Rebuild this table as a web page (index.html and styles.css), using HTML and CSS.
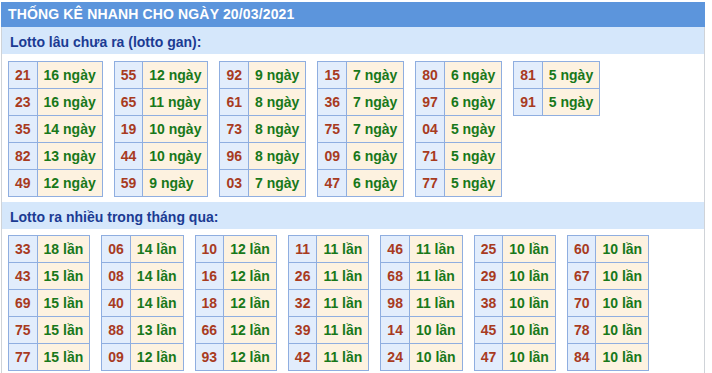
FILE: index.html
```html
<!DOCTYPE html>
<html lang="vi">
<head>
<meta charset="utf-8">
<link rel="stylesheet" href="styles.css">
</head>
<body>
<div class="wrap">
  <div class="title">THỐNG KÊ NHANH CHO NGÀY 20/03/2021</div>
  <div class="sec">Lotto lâu chưa ra (lotto gan):</div>
  <div class="grid g1">
    <table><tr><td class="n">21</td><td class="v">16 ngày</td></tr><tr><td class="n">23</td><td class="v">16 ngày</td></tr><tr><td class="n">35</td><td class="v">14 ngày</td></tr><tr><td class="n">82</td><td class="v">13 ngày</td></tr><tr><td class="n">49</td><td class="v">12 ngày</td></tr></table>
    <table><tr><td class="n">55</td><td class="v">12 ngày</td></tr><tr><td class="n">65</td><td class="v">11 ngày</td></tr><tr><td class="n">19</td><td class="v">10 ngày</td></tr><tr><td class="n">44</td><td class="v">10 ngày</td></tr><tr><td class="n">59</td><td class="v">9 ngày</td></tr></table>
    <table><tr><td class="n">92</td><td class="v">9 ngày</td></tr><tr><td class="n">61</td><td class="v">8 ngày</td></tr><tr><td class="n">73</td><td class="v">8 ngày</td></tr><tr><td class="n">96</td><td class="v">8 ngày</td></tr><tr><td class="n">03</td><td class="v">7 ngày</td></tr></table>
    <table><tr><td class="n">15</td><td class="v">7 ngày</td></tr><tr><td class="n">36</td><td class="v">7 ngày</td></tr><tr><td class="n">75</td><td class="v">7 ngày</td></tr><tr><td class="n">09</td><td class="v">6 ngày</td></tr><tr><td class="n">47</td><td class="v">6 ngày</td></tr></table>
    <table><tr><td class="n">80</td><td class="v">6 ngày</td></tr><tr><td class="n">97</td><td class="v">6 ngày</td></tr><tr><td class="n">04</td><td class="v">5 ngày</td></tr><tr><td class="n">71</td><td class="v">5 ngày</td></tr><tr><td class="n">77</td><td class="v">5 ngày</td></tr></table>
    <table><tr><td class="n">81</td><td class="v">5 ngày</td></tr><tr><td class="n">91</td><td class="v">5 ngày</td></tr></table>
  </div>
  <div class="sec sec2">Lotto ra nhiều trong tháng qua:</div>
  <div class="grid g2">
    <table><tr><td class="n">33</td><td class="v">18 lần</td></tr><tr><td class="n">43</td><td class="v">15 lần</td></tr><tr><td class="n">69</td><td class="v">15 lần</td></tr><tr><td class="n">75</td><td class="v">15 lần</td></tr><tr><td class="n">77</td><td class="v">15 lần</td></tr></table>
    <table><tr><td class="n">06</td><td class="v">14 lần</td></tr><tr><td class="n">08</td><td class="v">14 lần</td></tr><tr><td class="n">40</td><td class="v">14 lần</td></tr><tr><td class="n">88</td><td class="v">13 lần</td></tr><tr><td class="n">09</td><td class="v">12 lần</td></tr></table>
    <table><tr><td class="n">10</td><td class="v">12 lần</td></tr><tr><td class="n">16</td><td class="v">12 lần</td></tr><tr><td class="n">18</td><td class="v">12 lần</td></tr><tr><td class="n">66</td><td class="v">12 lần</td></tr><tr><td class="n">93</td><td class="v">12 lần</td></tr></table>
    <table><tr><td class="n">11</td><td class="v">11 lần</td></tr><tr><td class="n">26</td><td class="v">11 lần</td></tr><tr><td class="n">32</td><td class="v">11 lần</td></tr><tr><td class="n">39</td><td class="v">11 lần</td></tr><tr><td class="n">42</td><td class="v">11 lần</td></tr></table>
    <table><tr><td class="n">46</td><td class="v">11 lần</td></tr><tr><td class="n">68</td><td class="v">11 lần</td></tr><tr><td class="n">98</td><td class="v">11 lần</td></tr><tr><td class="n">14</td><td class="v">10 lần</td></tr><tr><td class="n">24</td><td class="v">10 lần</td></tr></table>
    <table><tr><td class="n">25</td><td class="v">10 lần</td></tr><tr><td class="n">29</td><td class="v">10 lần</td></tr><tr><td class="n">38</td><td class="v">10 lần</td></tr><tr><td class="n">45</td><td class="v">10 lần</td></tr><tr><td class="n">47</td><td class="v">10 lần</td></tr></table>
    <table><tr><td class="n">60</td><td class="v">10 lần</td></tr><tr><td class="n">67</td><td class="v">10 lần</td></tr><tr><td class="n">70</td><td class="v">10 lần</td></tr><tr><td class="n">78</td><td class="v">10 lần</td></tr><tr><td class="n">84</td><td class="v">10 lần</td></tr></table>
  </div>
</div>
</body>
</html>
```
FILE: styles.css
```css
html, body {
  margin: 0;
  padding: 0;
  background: #ffffff;
}
body {
  font-family: "Liberation Sans", Arial, sans-serif;
  font-size: 14px;
  font-weight: bold;
}
.wrap {
  margin: 2px 0 0 1px;
  width: 704px;
  box-sizing: border-box;
  border-left: 1px solid #cfd3d8;
  border-right: 1px solid #cfd3d8;
  min-height: 371px;
}
.title {
  background: #5c95dc;
  color: #ffffff;
  height: 25px;
  line-height: 25px;
  padding-left: 7px;
  margin-left: -1px;
  margin-right: -1px;
  letter-spacing: 0.15px;
}
.sec {
  background: #d5e7fb;
  color: #1b3b93;
  height: 27px;
  box-sizing: border-box;
  padding: 7px 0 0 8px;
  line-height: 16px;
}
.sec2 {
  margin-top: 5px;
}
.grid {
  display: flex;
  align-items: flex-start;
  gap: 11px;
  padding-left: 6px;
}
.g1 {
  padding-top: 7px;
}
.g2 {
  padding-top: 6px;
  gap: 11px;
}
table {
  border-collapse: collapse;
}
td {
  border: 1px solid #8faee0;
  height: 27px;
  padding: 0 6px;
  box-sizing: border-box;
  white-space: nowrap;
}
td.n {
  background: #e2edfc;
  color: #a83b1f;
  text-align: center;
}
td.v {
  background: #fdf2e0;
  color: #18781a;
  text-align: left;
}
```
